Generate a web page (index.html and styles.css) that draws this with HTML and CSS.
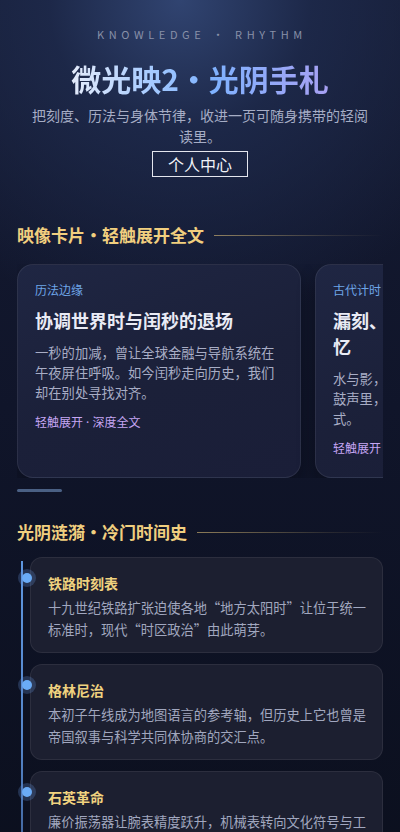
FILE: index.html
```html
<!DOCTYPE html>
<html lang="zh-CN">
<head>
<meta charset="utf-8">
<meta name="viewport" content="width=device-width, initial-scale=1">
<title>微光映2·光阴手札</title>
<link rel="stylesheet" href="styles.css">
</head>
<body>
<div class="page">
  <header class="hero">
    <p class="eyebrow">KNOWLEDGE · RHYTHM</p>
    <h1 class="title">微光映2·光阴手札</h1>
    <p class="lead">把刻度、历法与身体节律，收进一页可随身携带的轻阅读里。</p>
    <a class="profile-btn" href="#">个人中心</a>
  </header>

  <section class="section">
    <h2 class="section-title"><span>映像卡片·轻触展开全文</span></h2>
    <div class="cards">
      <article class="card">
        <p class="card-tag">历法边缘</p>
        <h3 class="card-title">协调世界时与闰秒的退场</h3>
        <p class="card-text">一秒的加减，曾让全球金融与导航系统在午夜屏住呼吸。如今闰秒走向历史，我们却在别处寻找对齐。</p>
        <p class="card-link">轻触展开 · 深度全文</p>
      </article>
      <article class="card">
        <p class="card-tag">古代计时</p>
        <h3 class="card-title">漏刻、更鼓与钟楼里的城市记忆</h3>
        <p class="card-text">水与影，曾是古人最早的计时器；晨钟暮鼓声里，一座城市慢慢学会共同作息的仪式。</p>
        <p class="card-link">轻触展开 · 深度全文</p>
      </article>
      <article class="card">
        <p class="card-tag">身体节律</p>
        <h3 class="card-title">昼夜节律与褪黑素</h3>
        <p class="card-text">体内的时钟与日光同步，光照改变着我们入睡与醒来的节奏。</p>
        <p class="card-link">轻触展开 · 深度全文</p>
      </article>
    </div>
    <div class="scroll-track"><div class="scroll-thumb"></div></div>
  </section>

  <section class="section section-timeline">
    <h2 class="section-title"><span>光阴涟漪·冷门时间史</span></h2>
    <div class="timeline">
      <article class="tl-item">
        <span class="tl-dot"></span>
        <h3 class="tl-title">铁路时刻表</h3>
        <p class="tl-text">十九世纪铁路扩张迫使各地“地方太阳时”让位于统一标准时，现代“时区政治”由此萌芽。</p>
      </article>
      <article class="tl-item">
        <span class="tl-dot"></span>
        <h3 class="tl-title">格林尼治</h3>
        <p class="tl-text">本初子午线成为地图语言的参考轴，但历史上它也曾是帝国叙事与科学共同体协商的交汇点。</p>
      </article>
      <article class="tl-item">
        <span class="tl-dot"></span>
        <h3 class="tl-title">石英革命</h3>
        <p class="tl-text">廉价振荡器让腕表精度跃升，机械表转向文化符号与工艺收藏，时间从此更便宜也更私人。</p>
      </article>
    </div>
  </section>
</div>
</body>
</html>
```

FILE: styles.css
```css
* { box-sizing: border-box; }

html, body {
  margin: 0;
  padding: 0;
}

body {
  background: #0c1020;
  font-family: "Noto Sans CJK SC", "Noto Sans", sans-serif;
  color: #e6e8f2;
}

.page {
  min-height: 100vh;
  background:
    radial-gradient(ellipse 330px 330px at 45% 0%, rgba(50, 70, 116, 0.95) 0%, rgba(30, 42, 76, 0.85) 40%, rgba(20, 27, 50, 0) 100%),
    linear-gradient(180deg, #151b33 0%, #10152a 45%, #0b0f1d 100%);
  padding-bottom: 40px;
  overflow: hidden;
}

/* ---------- hero ---------- */
.hero {
  padding: 25px 28px 0;
  text-align: center;
  display: flex;
  flex-direction: column;
  align-items: center;
}

.eyebrow {
  margin: 0;
  font-size: 11px;
  line-height: 18px;
  letter-spacing: 4.6px;
  color: #8890a8;
  padding-left: 4px;
}

.title {
  margin: 15px 0 0;
  font-size: 30px;
  line-height: 40px;
  font-weight: 700;
  background: linear-gradient(90deg, #e4ebfa 0%, #9ec6ff 35%, #7fb2ff 55%, #a7a0f2 100%);
  -webkit-background-clip: text;
  background-clip: text;
  color: transparent;
}

.lead {
  margin: 7px 0 0;
  font-size: 14px;
  line-height: 21px;
  color: #a6adc5;
}

.profile-btn {
  margin-top: 4px;
  display: inline-block;
  padding: 0 15px;
  border: 1px solid #e4e6ee;
  color: #f2f3f8;
  font-size: 16px;
  line-height: 24px;
  text-decoration: none;
}

/* ---------- sections ---------- */
.section {
  padding: 0 17px;
  margin-top: 46px;
}

.section-timeline {
  margin-top: 28px;
}

.section-title {
  margin: 0;
  display: flex;
  align-items: center;
  gap: 10px;
  font-size: 17px;
  line-height: 24px;
  font-weight: 700;
  color: #f1cf7f;
}

.section-title::after {
  content: "";
  flex: 1;
  height: 1px;
  background: linear-gradient(90deg, rgba(241, 207, 127, 0.55), rgba(241, 207, 127, 0.12) 70%, rgba(241, 207, 127, 0));
}

/* ---------- cards ---------- */
.cards {
  margin-top: 17px;
  display: flex;
  gap: 14px;
  overflow-x: auto;
  scrollbar-width: none;
}

.card {
  flex: 0 0 284px;
  border-radius: 16px;
  border: 1px solid rgba(255, 255, 255, 0.08);
  background: linear-gradient(160deg, #1f2643 0%, #1b2039 55%, #1a1e38 100%);
  box-shadow: 0 8px 18px rgba(0, 0, 0, 0.28);
  padding: 16px 17px 19px;
}

.card-tag {
  margin: 0;
  font-size: 12px;
  line-height: 18px;
  color: #6ea6e8;
}

.card-title {
  margin: 8px 0 0;
  font-size: 18px;
  line-height: 26px;
  font-weight: 700;
  color: #e9ebf5;
}

.card-text {
  margin: 10px 0 0;
  font-size: 13.3px;
  line-height: 20px;
  color: #a8adc5;
}

.card-link {
  margin: 11px 0 0;
  font-family: "Noto Sans", "Noto Sans CJK SC", sans-serif;
  font-size: 12px;
  line-height: 18px;
  color: #c6a6f4;
}

.scroll-track {
  margin-top: 11px;
  height: 3px;
}

.scroll-thumb {
  width: 45px;
  height: 3px;
  border-radius: 2px;
  background: #4a6084;
}

/* ---------- timeline ---------- */
.timeline {
  margin-top: 13px;
  position: relative;
  padding-left: 13px;
  display: flex;
  flex-direction: column;
  gap: 11px;
}

.timeline::before {
  content: "";
  position: absolute;
  left: 4px;
  top: 4px;
  bottom: 0;
  width: 2px;
  background: linear-gradient(180deg, #5e96e0 0%, #5585c8 60%, #3d5f94 100%);
}

.tl-item {
  position: relative;
  border-radius: 12px;
  border: 1px solid rgba(255, 255, 255, 0.07);
  background: #1c1f30;
  padding: 15px 15px 11px 17px;
}

.tl-dot {
  position: absolute;
  left: -9px;
  top: 15px;
  width: 10px;
  height: 10px;
  border-radius: 50%;
  background: #6aabf6;
  box-shadow: 0 0 0 4px rgba(96, 140, 210, 0.28);
}

.tl-title {
  margin: 0;
  font-size: 14px;
  line-height: 20px;
  font-weight: 700;
  color: #f0d27f;
}

.tl-text {
  margin: 4px 0 0;
  font-size: 13.25px;
  line-height: 22px;
  color: #a1a7bf;
}
```
